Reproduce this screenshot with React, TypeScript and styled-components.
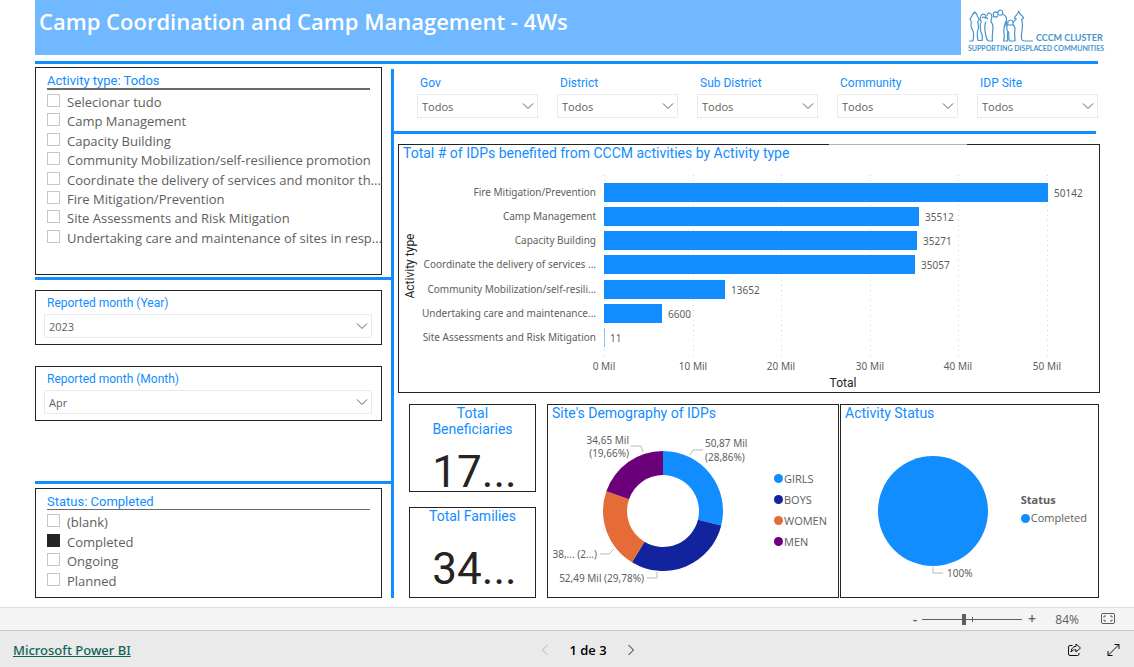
import React, { useState } from "react";
import styled, { createGlobalStyle } from "styled-components";

const c = {
  blue: "#118dff",
  banner: "#70b8ff",
  ink: "#252423",
  text: "#605e5c",
  line: "#252423",
  soft: "#eaeaea",
  navy: "#12239e",
  orange: "#e66c37",
  purple: "#6b007b",
  logo: "#4795cf",
};
const body = `"Open Sans", "Noto Sans", sans-serif`;
const noto = `"Noto Sans", "Open Sans", sans-serif`;
const din = `Roboto, "Liberation Sans", sans-serif`;

const Global = createGlobalStyle`
  * { box-sizing: border-box; }
  body { margin: 0; background: #fff; font-family: ${body}; color: ${c.text}; }
  ul, h1, h2, p { margin: 0; padding: 0; font-weight: normal; }
  ul { list-style: none; }
  button, select, input { font: inherit; color: inherit; margin: 0; }
  button { border: 0; padding: 0; background: none; display: inline-flex; cursor: pointer; }
`;

const Page = styled.div`
  min-height: 100vh;
  display: flex;
  flex-direction: column;
`;
const Report = styled.main`
  flex: 1;
  display: flex;
  flex-direction: column;
  padding: 0 34px 9px 35px;
`;
const Header = styled.header`
  display: flex;
  height: 55px;
`;
const Banner = styled.h1`
  flex: 1;
  background: ${c.banner};
  color: #fff;
  font-size: 22px;
  line-height: 28px;
  font-weight: 600;
  padding: 7px 4px;
`;
const LogoBox = styled.div`
  width: 139px;
  padding: 8px 0 0 7px;
`;
const Rule = styled.hr`
  flex: none;
  width: 100%;
  height: 3px;
  border: 0;
  margin: 0;
  background: ${c.blue};
`;
const HeadRule = styled.div`
  padding: 6px 2px 3px 0;
`;
const Columns = styled.div`
  flex: 1;
  display: flex;
`;
const Left = styled.div`
  width: 356px;
  display: flex;
  flex-direction: column;
`;
const Divider = styled.div`
  width: 3px;
  margin-top: 2px;
  background: ${c.blue};
`;
const Right = styled.div`
  flex: 1;
  min-width: 0;
  display: flex;
  flex-direction: column;
`;
const Gap = styled.div<{ $h: number }>`
  flex: none;
  height: ${(p) => p.$h}px;
`;
const Spring = styled.div`
  flex: 1;
`;

const Panel = styled.section`
  position: relative;
  display: flex;
  flex-direction: column;
  border: 1px solid ${c.line};
  background: #fff;
`;
const SlicerPanel = styled(Panel)<{ $h: number; $end: number }>`
  min-height: ${(p) => p.$h}px;
  margin-right: 9px;
  padding: 5px 4px ${(p) => p.$end}px 11px;
`;
const SlicerTitle = styled.h2<{ $rule: number }>`
  font-family: ${din};
  font-size: 13px;
  line-height: 15px;
  color: ${c.blue};
  margin-right: 7px;
  border-bottom: ${(p) => p.$rule}px solid #6b6a69;
`;
const CheckList = styled.ul`
  flex: 1;
  display: grid;
  grid-auto-rows: 1fr;
  margin-top: 3px;
`;
const CheckLabel = styled.label`
  display: flex;
  align-items: flex-start;
  gap: 7px;
  font-size: 13px;
  line-height: 18px;
  white-space: nowrap;
`;
const Check = styled.input`
  appearance: none;
  flex: none;
  width: 13px;
  height: 13px;
  margin-top: 1px;
  border: 1px solid #c8c6c4;
  background: #fff;
  &:checked {
    background: ${c.ink};
    border-color: ${c.ink};
  }
`;
const DropPanel = styled(Panel)`
  margin-right: 9px;
  padding: 4px 9px 6px 8px;
`;
const Field = styled.label`
  display: flex;
  flex-direction: column;
  gap: 3px;
  min-width: 0;
`;
const FieldName = styled.span`
  font-family: ${din};
  font-size: 12px;
  line-height: 16px;
  color: ${c.blue};
  padding-left: 3px;
`;
const SelectWrap = styled.span`
  display: flex;
  align-items: center;
  position: relative;
  svg {
    position: absolute;
    right: 4px;
    pointer-events: none;
  }
`;
const Select = styled.select`
  appearance: none;
  width: 100%;
  height: 24px;
  border: 1px solid ${c.soft};
  border-radius: 0;
  background: #fff;
  padding: 0 4px;
  font-size: 11px;
`;
const Filters = styled.div`
  display: grid;
  grid-template-columns: repeat(5, 1fr);
  gap: 19px;
  padding: 8px 2px 13px 23px;
`;
const RightRule = styled.div`
  padding-right: 4px;
`;
const Visuals = styled.div`
  flex: 1;
  display: flex;
  flex-direction: column;
  gap: 11px;
  padding: 10px 0 0 4px;
`;
const BarPanel = styled(Panel)`
  height: 249px;
  &::before {
    content: "";
    position: absolute;
    top: -1px;
    left: 430px;
    width: 138px;
    height: 1px;
    background: #b3b3b3;
  }
`;
const VisualTitle = styled.h2`
  font-family: ${din};
  font-size: 14px;
  line-height: 16px;
  color: ${c.blue};
  padding: 0 4px;
`;
const CardTitle = styled(VisualTitle)`
  padding: 0 16px;
  text-align: center;
`;
const Bottom = styled.div`
  flex: 1;
  display: flex;
  gap: 11px;
  padding: 0 1px 0 11px;
`;
const Cards = styled.div`
  width: 127px;
  display: grid;
  grid-template-rows: 88fr 91fr;
  gap: 15px;
`;
const Card = styled(Panel)`
  min-height: 0;
`;
const Big = styled.p`
  flex: 1;
  display: flex;
  align-items: center;
  justify-content: center;
  font-family: ${din};
  font-size: 44px;
  line-height: 36px;
  color: ${c.ink};
  padding: 16px 0 0 4px;
`;
const Pies = styled.div`
  flex: 1;
  display: grid;
  grid-template-columns: 292fr 259fr;
  gap: 1px;
`;
const PieBody = styled.div`
  flex: 1;
  display: flex;
  justify-content: space-between;
  align-items: flex-start;
  padding-right: 11px;
`;
const Legend = styled.ul<{ $top: number }>`
  padding-top: ${(p) => p.$top}px;
  font-size: 11px;
`;
const LegendTitle = styled.li`
  font-weight: 700;
  line-height: 18px;
`;
const LegendItem = styled.li<{ $color: string; $line: number }>`
  display: flex;
  align-items: center;
  gap: 1px;
  line-height: ${(p) => p.$line}px;
  &::before {
    content: "";
    width: 9px;
    height: 9px;
    border-radius: 50%;
    background: ${(p) => p.$color};
  }
`;
const Drawing = styled.svg`
  display: block;
  font-family: ${noto};
  font-size: 10px;
  fill: ${c.text};
`;
const AxisName = styled.text`
  font-family: ${din};
  font-size: 12px;
  fill: ${c.ink};
  text-anchor: middle;
`;

const ZoomBar = styled.div`
  display: flex;
  align-items: center;
  justify-content: flex-end;
  height: 23px;
  border-top: 1px solid #dcdcdc;
  background: #f4f4f4;
  padding-right: 18px;
  font-size: 12px;
`;
const Sign = styled.button`
  width: 10px;
  justify-content: center;
  font-size: 14px;
  line-height: 20px;
  font-weight: 600;
`;
const Range = styled.input`
  appearance: none;
  width: 100px;
  height: 12px;
  margin: 0 5px 0 2px;
  background:
    linear-gradient(${c.text}, ${c.text}) 50px 4px / 1px 5px no-repeat,
    linear-gradient(${c.text}, ${c.text}) 0 6px / 100% 1px no-repeat;
  &::-webkit-slider-thumb {
    appearance: none;
    width: 4px;
    height: 11px;
    background: ${c.text};
  }
`;
const Percent = styled.output`
  width: 42px;
  margin: 0 22px 0 0;
  text-align: right;
`;
const Footer = styled.footer`
  display: grid;
  grid-template-columns: 1fr auto 1fr;
  align-items: center;
  height: 37px;
  border-top: 1px solid #c8c8c8;
  background: #eaeaea;
  padding: 2px 13px 0;
  color: #000;
`;
const Brand = styled.a`
  justify-self: start;
  color: #0f6458;
  font-family: ${noto};
  font-size: 13px;
  font-weight: 500;
`;
const Pager = styled.nav`
  display: flex;
  align-items: center;
  gap: 20px;
  padding-left: 42px;
  font-size: 13px;
  font-weight: 600;
`;
const Actions = styled.div`
  display: flex;
  justify-content: flex-end;
  gap: 24px;
`;

const Chevron = () => (
  <svg width="12" height="8" viewBox="0 0 12 8" fill="none" stroke="#605e5c" aria-hidden="true">
    <path d="M1 1.500l5 5 5-5" />
  </svg>
);

function Dropdown({ name, value }: { name: string; value: string }) {
  return (
    <Field>
      <FieldName>{name}</FieldName>
      <SelectWrap>
        <Select defaultValue={value}>
          <option>{value}</option>
        </Select>
        <Chevron />
      </SelectWrap>
    </Field>
  );
}

function Slicer(p: { title: string; items: string[]; checked?: string; rule: number; h: number; end: number }) {
  return (
    <SlicerPanel $h={p.h} $end={p.end}>
      <SlicerTitle $rule={p.rule}>{p.title}</SlicerTitle>
      <CheckList>
        {p.items.map((t) => (
          <li key={t}>
            <CheckLabel>
              <Check type="checkbox" defaultChecked={t === p.checked} />
              {t}
            </CheckLabel>
          </li>
        ))}
      </CheckList>
    </SlicerPanel>
  );
}

const activities = [
  "Selecionar tudo",
  "Camp Management",
  "Capacity Building",
  "Community Mobilization/self-resilience promotion",
  "Coordinate the delivery of services and monitor th...",
  "Fire Mitigation/Prevention",
  "Site Assessments and Risk Mitigation",
  "Undertaking care and maintenance of sites in resp...",
];

const bars: [string, number][] = [
  ["Fire Mitigation/Prevention", 50142],
  ["Camp Management", 35512],
  ["Capacity Building", 35271],
  ["Coordinate the delivery of services ...", 35057],
  ["Community Mobilization/self-resili...", 13652],
  ["Undertaking care and maintenance...", 6600],
  ["Site Assessments and Risk Mitigation", 11],
];

function BarChart() {
  const x0 = 205;
  const px = (v: number) => Math.round((v / 50000) * 443);
  const top = (i: number) => 22 + Math.round((i * 169) / 7);
  return (
    <Drawing width="100%" height="231" viewBox="0 0 700 231">
      {[0, 10, 20, 30, 40, 50].map((m) => (
        <g key={m}>
          <path d={`M${x0 + px(m * 1000)}.5 14V197`} stroke="#d6d5d4" strokeDasharray="1 4" />
          <text x={x0 + px(m * 1000)} y="209" textAnchor="middle">{m} Mil</text>
        </g>
      ))}
      {bars.map(([name, v], i) => (
        <g key={name}>
          <text x="197" y={top(i) + 13} textAnchor="end">{name}</text>
          <rect x={x0} y={top(i)} width={Math.max(1, px(v))} height="19" fill={c.blue} opacity={v < 100 ? 0.5 : 1} />
          <text x={x0 + px(v) + 6} y={top(i) + 14}>{v}</text>
        </g>
      ))}
      <AxisName x="444" y="226">Total</AxisName>
      <AxisName transform="translate(15 105) rotate(-90)">Activity type</AxisName>
    </Drawing>
  );
}

const groups = [
  { name: "GIRLS", share: 28.86, color: c.blue },
  { name: "BOYS", share: 29.78, color: c.navy },
  { name: "WOMEN", share: 21.7, color: c.orange },
  { name: "MEN", share: 19.66, color: c.purple },
];

function Donut() {
  const cx = 115, cy = 90, R = 60, r = 36;
  let acc = 0;
  const pt = (rad: number, f: number) =>
    `${cx + rad * Math.sin(f * 2 * Math.PI)} ${cy - rad * Math.cos(f * 2 * Math.PI)}`;
  return (
    <Drawing width="204" height="172" viewBox="0 0 204 172">
      {groups.map((g) => {
        const a = acc;
        const b = (acc += g.share / 100);
        return (
          <path
            key={g.name}
            fill={g.color}
            d={`M${pt(R, a)}A${R} ${R} 0 0 1 ${pt(R, b)}L${pt(r, b)}A${r} ${r} 0 0 0 ${pt(r, a)}Z`}
          />
        );
      })}
      <g fill="none" stroke="#b9b7b5">
        <path d="M142 34l3-5h10M95 31l-2-6h-10M66 128l-5 5H52M109 151v6H99" />
      </g>
      <text x="157" y="26">50,87 Mil</text>
      <text x="157" y="40">(28,86%)</text>
      <text x="81" y="23" textAnchor="end">34,65 Mil</text>
      <text x="81" y="36" textAnchor="end">(19,66%)</text>
      <text x="49" y="137" textAnchor="end">38,... (2...)</text>
      <text x="96" y="161" textAnchor="end">52,49 Mil (29,78%)</text>
    </Drawing>
  );
}

function StatusPie() {
  return (
    <Drawing width="150" height="172" viewBox="0 0 150 172">
      <circle cx="92" cy="90" r="55" fill={c.blue} />
      <path d="M92 146v6h10" fill="none" stroke="#b9b7b5" />
      <text x="106" y="156">100%</text>
    </Drawing>
  );
}

const LogoText = styled.text`
  font-family: Lato, "Open Sans", sans-serif;
  font-weight: 700;
`;

function Logo() {
  return (
    <svg width="134" height="44" viewBox="0 0 134 44" overflow="visible" role="img" aria-label="CCCM Cluster" fill={c.logo}>
      <g fill="none" stroke={c.logo} strokeWidth="1.200" strokeLinejoin="round" strokeLinecap="round">
        <path d="M1.500 33h3.500c.8-4 .8-9-.8-12-1.800-2-1.500-4-.8-7.500L2 11.500c.5-2 2-2.500 2.500-5L6.700 4l2.200 2.500c.3 2.500 2 3 2.300 5l-1.500 2c1 4 1.300 7-.2 9.500-.6 4-.3 7 .5 9.500h4c1-3 .2-6-1.200-9-.6-4-1.300-7 .4-9.500-1.500-3-1-5 .3-7 2-2 4-.5 4.300 2l1.700 1.500" />
        <path d="M14.500 9.500c1-.8 2-.5 3 .5M19 7.500c.2-2.500 3-3.500 4.200-1.200 1.600 2.700.2 5-.4 7.200 2 2 2.500 5 2 8.500-.3 4-1 8-.2 11h-4c-2.500-1.500-2.800-5-3.200-8-.8-4-1-8 .4-11" />
        <path d="M25.500 8.500c-.6-2.500 0-4.500 2-4.700 1.500 0 2 .7 2.300 1.700.2-2.500 1-3.500 2.700-3.500 2 .2 2.500 2 2.200 4.500 2.500.5 4 2.500 3.800 5.500.3 3 .3 4-.5 6M26 8.500c1 1 2.500.7 3.800-.5M30 6.500c1.500 1 3 .8 4.500 0M38 13c-1.500 4-2.700 8-2 12 .5 3 .3 6-.5 8h4c.5-3-.5-6 .3-9.500" />
        <path d="M40 24c-1.500-2.500-1.800-5-.2-7.500-.3-2.500.6-4.500 2.700-4.500s3 2 2.500 4.500c2 2 2.500 5 1.500 8 .3 3 .5 6 .5 8.500h-5.500c-1.500-3-.5-6-.8-9M40 16.500c1.500.8 3.300.8 5 0" />
        <path d="M45.500 14c.5-1.500 2-2 2.800-3l-1.800-1c.5-2.500 3.500-3 4.200-7 .7 4 4 4.500 5 7l-2 1.500c1 4 1 7 .3 11-.5 3.500-.7 6-.5 8 .3 1.800 1.500 2.500 3 2.500h8" />
      </g>
      <LogoText x="68" y="33" fontSize="9">CCCM CLUSTER</LogoText>
      <LogoText x="0" y="43" fontSize="7">SUPPORTING DISPLACED COMMUNITIES</LogoText>
    </svg>
  );
}

export default function App() {
  const [zoom, setZoom] = useState(84);
  return (
    <Page>
      <Global />
      <Report>
        <Header>
          <Banner>Camp Coordination and Camp Management - 4Ws</Banner>
          <LogoBox><Logo /></LogoBox>
        </Header>
        <HeadRule><Rule /></HeadRule>
        <Columns>
          <Left>
            <Slicer title="Activity type: Todos" items={activities} rule={2} h={208} end={26} />
            <Gap $h={2} />
            <Rule />
            <Gap $h={10} />
            <DropPanel><Dropdown name="Reported month (Year)" value="2023" /></DropPanel>
            <Gap $h={21} />
            <DropPanel><Dropdown name="Reported month (Month)" value="Apr" /></DropPanel>
            <Spring />
            <Rule />
            <Gap $h={4} />
            <Slicer
              title="Status: Completed"
              items={["(blank)", "Completed", "Ongoing", "Planned"]}
              checked="Completed"
              rule={1}
              h={110}
              end={6}
            />
          </Left>
          <Divider />
          <Right>
            <Filters>
              {["Gov", "District", "Sub District", "Community", "IDP Site"].map((n) => (
                <Dropdown key={n} name={n} value="Todos" />
              ))}
            </Filters>
            <RightRule><Rule /></RightRule>
            <Visuals>
              <BarPanel>
                <VisualTitle>Total # of IDPs benefited from CCCM activities by Activity type</VisualTitle>
                <BarChart />
              </BarPanel>
              <Bottom>
                <Cards>
                  <Card>
                    <CardTitle>Total Beneficiaries</CardTitle>
                    <Big>17...</Big>
                  </Card>
                  <Card>
                    <CardTitle>Total Families</CardTitle>
                    <Big>34...</Big>
                  </Card>
                </Cards>
                <Pies>
                  <Panel>
                    <VisualTitle>Site's Demography of IDPs</VisualTitle>
                    <PieBody>
                      <Donut />
                      <Legend $top={47}>
                        {groups.map((g) => (
                          <LegendItem key={g.name} $color={g.color} $line={21}>{g.name}</LegendItem>
                        ))}
                      </Legend>
                    </PieBody>
                  </Panel>
                  <Panel>
                    <VisualTitle>Activity Status</VisualTitle>
                    <PieBody>
                      <StatusPie />
                      <Legend $top={70}>
                        <LegendTitle>Status</LegendTitle>
                        <LegendItem $color={c.blue} $line={18}>Completed</LegendItem>
                      </Legend>
                    </PieBody>
                  </Panel>
                </Pies>
              </Bottom>
            </Visuals>
          </Right>
        </Columns>
      </Report>
      <ZoomBar>
        <Sign aria-label="Zoom out" onClick={() => setZoom(zoom - 10)}>-</Sign>
        <Range type="range" aria-label="Zoom" min={0} max={200} value={zoom} onChange={(e) => setZoom(+e.target.value)} />
        <Sign aria-label="Zoom in" onClick={() => setZoom(zoom + 10)}>+</Sign>
        <Percent>{zoom}%</Percent>
        <button aria-label="Fit to page">
          <svg width="15" height="12" viewBox="0 0 15 12" fill="none" stroke={c.text}>
            <rect x="0.500" y="0.500" width="13" height="10" rx="1.500" />
            <path d="M3 4.500V3h2M9 3h2v1.500M11 6.500V8H9M5 8H3V6.500" />
          </svg>
        </button>
      </ZoomBar>
      <Footer>
        <Brand href="#powerbi">Microsoft Power BI</Brand>
        <Pager aria-label="Pages">
          <button aria-label="Previous page">
            <svg width="8" height="12" viewBox="0 0 8 12" fill="none" stroke="#b8b8b8"><path d="M6.500 1L1.500 6l5 5" /></svg>
          </button>
          <span>1 de 3</span>
          <button aria-label="Next page">
            <svg width="8" height="12" viewBox="0 0 8 12" fill="none" stroke="#222"><path d="M1.500 1l5 5-5 5" /></svg>
          </button>
        </Pager>
        <Actions>
          <button aria-label="Share">
            <svg width="15" height="14" viewBox="0 0 15 14" fill="none" stroke="#111" strokeLinejoin="round">
              <path d="M5.500 2.500H3A1.500 1.500 0 0 0 1.500 4v7A1.500 1.500 0 0 0 3 12.500h7.500A1.500 1.500 0 0 0 12 11v-1" />
              <path d="M9 1l4.500 4L9 9V6.700C7 6.700 5.300 7.300 4 9c.2-3.200 2-5.500 5-5.700z" />
            </svg>
          </button>
          <button aria-label="Full screen">
            <svg width="15" height="14" viewBox="0 0 15 14" fill="none" stroke="#111">
              <path d="M2 12.500L13 1.500M8.500 1.500H13V6M2 8v4.500h4.500" />
            </svg>
          </button>
        </Actions>
      </Footer>
    </Page>
  );
}
